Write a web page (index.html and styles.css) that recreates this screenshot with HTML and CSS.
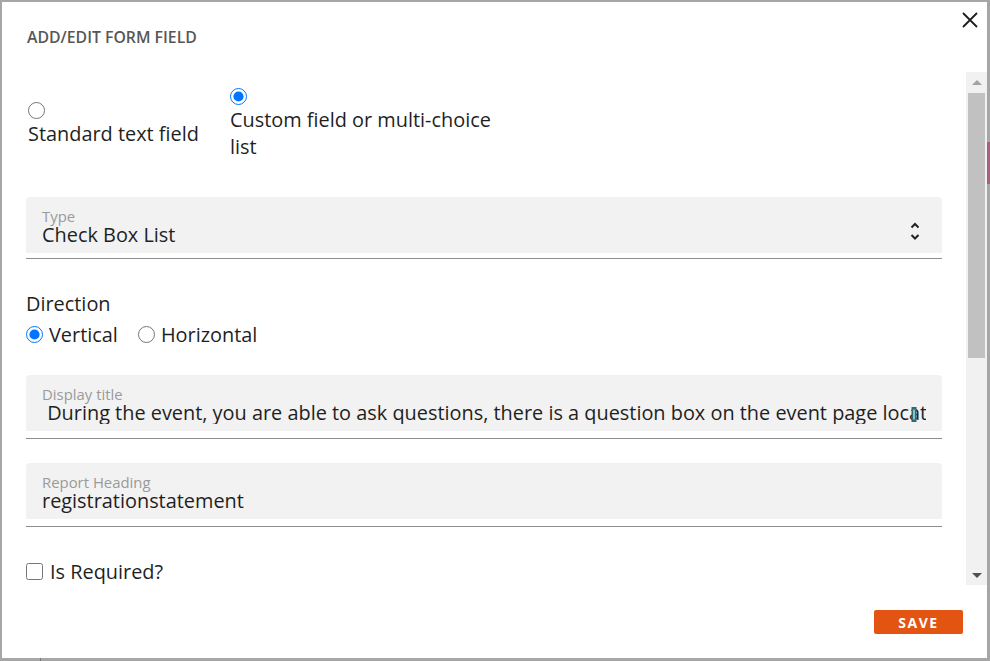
FILE: index.html
```html
<!DOCTYPE html>
<html lang="en">
<head>
<meta charset="utf-8">
<title>Add/Edit Form Field</title>
<link rel="stylesheet" href="styles.css">
</head>
<body>
<div class="dialog">
  <span class="behind behind-pink"></span>
  <span class="behind behind-line"></span>
  <header class="header">
    <h1 class="title">ADD/EDIT FORM FIELD</h1>
    <button class="close" type="button" aria-label="Close">
      <svg width="16" height="16" viewBox="0 0 16 16"><path d="M1 1 L15 15 M15 1 L1 15" stroke="#1e1e1e" stroke-width="1.8" fill="none"/></svg>
    </button>
  </header>
  <div class="main">
    <div class="content">
      <div class="mode-group">
        <label class="mode mode-standard"><input type="radio" name="mode"><span>Standard text field</span></label>
        <label class="mode mode-custom"><input type="radio" name="mode" checked><span>Custom field or multi-choice list</span></label>
      </div>

      <div class="field field-type">
        <div class="field-box">
          <div class="field-label">Type</div>
          <div class="field-value">Check Box List</div>
          <svg class="select-arrows" width="10" height="20" viewBox="0 0 10 20"><path d="M1.5 6.5 L5 3 L8.5 6.5 M1.5 14 L5 17.5 L8.5 14" stroke="#222" stroke-width="2" fill="none"/></svg>
        </div>
        <div class="field-line"></div>
      </div>

      <div class="direction">
        <div class="direction-label">Direction</div>
        <div class="direction-options">
          <label class="inline-radio"><input type="radio" name="dir" checked><span>Vertical</span></label>
          <label class="inline-radio"><input type="radio" name="dir"><span>Horizontal</span></label>
        </div>
      </div>

      <div class="field field-title">
        <div class="field-box">
          <div class="field-label">Display title</div>
          <div class="field-value field-value-clip">&nbsp;During the event, you are able to ask questions, there is a question box on the event page located below the video player.</div>
          <svg class="ibeam" width="8" height="15" viewBox="0 0 8 15"><rect x="1.5" y="0" width="5" height="15" fill="#2b6a76"/><rect x="3" y="2.5" width="2" height="10" fill="#8fbec5"/></svg>
        </div>
        <div class="field-line"></div>
      </div>

      <div class="field field-report">
        <div class="field-box">
          <div class="field-label">Report Heading</div>
          <div class="field-value">registrationstatement</div>
        </div>
        <div class="field-line"></div>
      </div>

      <label class="check"><input type="checkbox"><span>Is Required?</span></label>
    </div>
    <div class="scrollbar">
      <div class="sb-btn sb-up"><span class="tri tri-up"></span></div>
      <div class="sb-thumb"></div>
      <div class="sb-rest"></div>
      <div class="sb-btn sb-down"><span class="tri tri-down"></span></div>
    </div>
  </div>
  <footer class="footer">
    <button class="save" type="button">SAVE</button>
  </footer>
</div>
</body>
</html>
```

FILE: styles.css
```css
* { box-sizing: border-box; }

html, body {
  margin: 0;
  padding: 0;
  background: #ffffff;
}

body {
  font-family: "Open Sans", "Noto Sans", sans-serif;
  color: #1f1f1f;
}

.dialog {
  position: relative;
  width: 990px;
  height: 661px;
  border-style: solid;
  border-color: #a6a6a6;
  border-width: 2px 3px 3px 2px;
  background: #ffffff;
  display: flex;
  flex-direction: column;
}

.behind {
  position: absolute;
}

.behind-pink {
  right: -3px;
  top: 140px;
  width: 3px;
  height: 42px;
  background: #a8607e;
}

.behind-line {
  left: 38px;
  bottom: -3px;
  width: 1px;
  height: 3px;
  background: #7a7a7a;
}

.header {
  position: relative;
  height: 70px;
  flex: none;
}

.title {
  margin: 0;
  padding: 25px 0 0 25px;
  font-size: 15.8px;
  line-height: 20px;
  font-weight: 600;
  color: #575757;
}

.close {
  position: absolute;
  top: 10px;
  right: 9px;
  width: 16px;
  height: 16px;
  padding: 0;
  border: 0;
  background: none;
  display: flex;
}

.main {
  flex: none;
  height: 513px;
  display: flex;
}

.content {
  flex: 1;
  overflow: hidden;
  padding: 16px 24px 0 24px;
}

.mode-group {
  display: flex;
  align-items: center;
  font-size: 19.9px;
  line-height: 27px;
}

.mode {
  display: flex;
  flex-direction: column;
  align-items: flex-start;
}

.mode input {
  width: 17px;
  height: 17px;
  margin: 0 0 1px 0;
}

.mode-standard {
  width: 204px;
  padding-left: 2px;
}

.mode-custom {
  width: 272px;
}

.field {
  margin-top: 37px;
}

.field-box {
  position: relative;
  height: 56px;
  background: #f2f2f2;
  border-radius: 4px 4px 0 0;
  padding: 11px 16px 0 16px;
}

.field-label {
  font-size: 14.9px;
  line-height: 16px;
  color: #9a9a9a;
}

.field-value {
  font-size: 19.9px;
  line-height: 22px;
  color: #1f1f1f;
}

.field-value-clip {
  white-space: nowrap;
  overflow: hidden;
}

.field-line {
  height: 1px;
  margin-top: 5px;
  background: #8f8f8f;
}

.field-title .field-line,
.field-report .field-line {
  margin-top: 7px;
}

.select-arrows {
  position: absolute;
  right: 22px;
  top: 24px;
}

.ibeam {
  position: absolute;
  right: 24px;
  top: 32px;
}

.direction {
  margin-top: 31px;
  font-size: 19.9px;
  line-height: 27px;
}

.direction-options {
  display: flex;
  align-items: center;
  gap: 20px;
  margin-top: 4px;
}

.inline-radio {
  display: flex;
  align-items: center;
  gap: 6px;
}

.inline-radio input {
  width: 17px;
  height: 17px;
  margin: 0;
}

.field-title {
  margin-top: 27px;
}

.field-report {
  margin-top: 24px;
}

.check {
  display: flex;
  align-items: center;
  gap: 7px;
  margin-top: 31px;
  font-size: 19.9px;
  line-height: 27px;
}

.check input {
  width: 17px;
  height: 17px;
  margin: 0;
}

.scrollbar {
  flex: none;
  width: 21px;
  background: #f1f1f1;
  display: flex;
  flex-direction: column;
}

.sb-btn {
  height: 20px;
  flex: none;
  display: flex;
  align-items: center;
  justify-content: center;
}

.tri {
  width: 0;
  height: 0;
  border-left: 5px solid transparent;
  border-right: 5px solid transparent;
}

.tri-up {
  border-bottom: 5px solid #a3a3a3;
}

.tri-down {
  border-top: 5px solid #505050;
}

.sb-thumb {
  flex: none;
  height: 265px;
  margin: 1px 2px 0 2px;
  background: #c1c1c1;
}

.sb-rest {
  flex: 1;
}

.footer {
  flex: none;
  height: 73px;
  display: flex;
  justify-content: flex-end;
  align-items: flex-start;
  padding: 25px 24px 0 0;
}

.save {
  width: 89px;
  height: 24px;
  border: 0;
  border-radius: 2px;
  background: #e35412;
  color: #ffffff;
  font-family: "Open Sans", "Noto Sans", sans-serif;
  font-weight: 700;
  font-size: 14px;
  letter-spacing: 1.5px;
  padding: 0;
}
```
